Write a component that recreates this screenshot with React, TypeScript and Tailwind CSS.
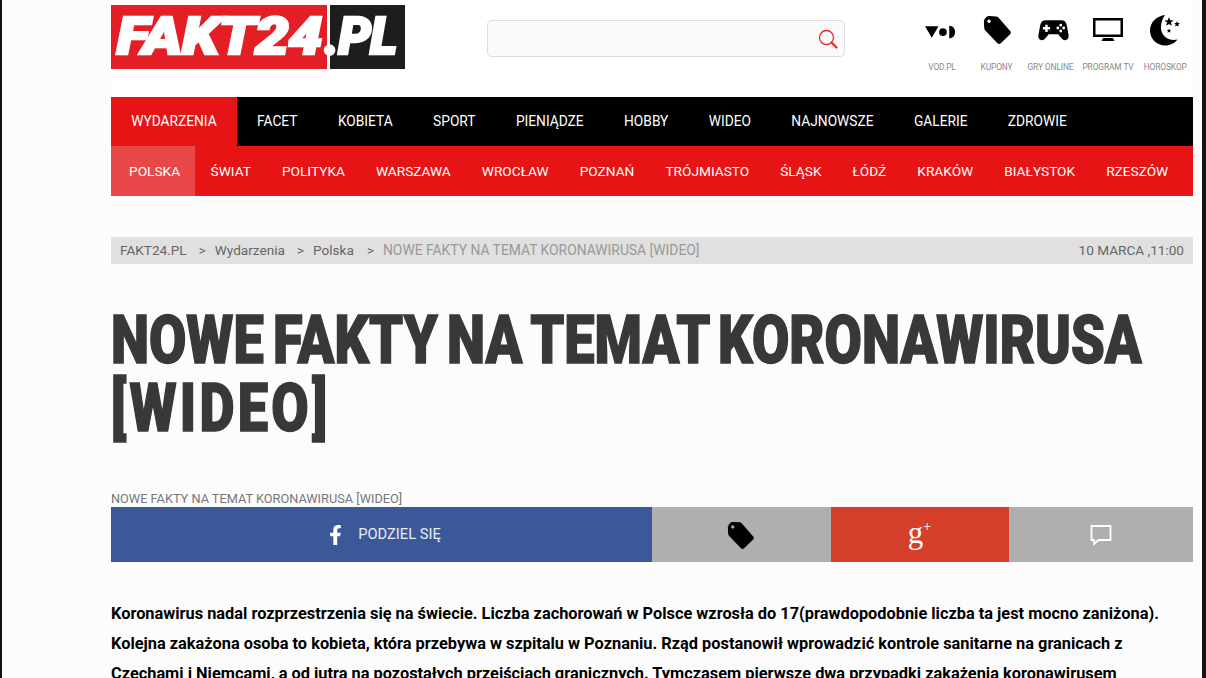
import React from "react"
import { FaFacebookF } from "react-icons/fa"

const roboto = "font-['Roboto',sans-serif]"

const topItems = ["WYDARZENIA", "FACET", "KOBIETA", "SPORT", "PIENIĄDZE", "HOBBY", "WIDEO", "NAJNOWSZE", "GALERIE", "ZDROWIE"]
const subItems = ["POLSKA", "ŚWIAT", "POLITYKA", "WARSZAWA", "WROCŁAW", "POZNAŃ", "TRÓJMIASTO", "ŚLĄSK", "ŁÓDŹ", "KRAKÓW", "BIAŁYSTOK", "RZESZÓW"]

const TagIcon = ({ className }: { className?: string }) => (
  <svg viewBox="0 0 32 32" className={className}>
    <path
      fillRule="evenodd"
      d="M3.5 3.5 C4.5 1.5 6 1 8 1 L15 1.5 C16 1.6 16.800 2 17.500 2.700 L30 17 C31 18.200 31 19.500 30 20.500 L20 30.200 C19 31.200 17.500 31.200 16.500 30.200 L3.500 16.500 C2.800 15.800 2.500 15 2.400 14 L2 7 C2 5.500 2.800 4.500 3.500 3.500 Z M7.500 4.800 A1.800 1.800 0 1 0 7.501 8.400 A1.800 1.800 0 1 0 7.500 4.800 Z"
    />
  </svg>
)

const VodIcon = () => (
  <svg viewBox="0 0 32 14" className="w-[31px] h-[14px] mt-[3px] mr-[3px]">
    <path d="M0 1 H14 L7 13 Z" />
    <circle cx="18.500" cy="7" r="4" />
    <path d="M25 0.500 C29 0.500 31 3.500 31 7 C31 10.500 29 13.500 25 13.500 Z" />
  </svg>
)

const PadIcon = () => (
  <svg viewBox="0 0 32 22" className="w-[31px] h-[22px] ml-[6px]">
    <path
      fillRule="evenodd"
      d="M8 1 H24 C27 1 28.800 2.500 29.600 5.500 L31.500 16 C32 19.500 30.500 21.500 28 21.500 C26 21.500 24.500 20 23 18 L21 15.500 H11 L9 18 C7.500 20 6 21.500 4 21.500 C1.500 21.500 0 19.500 0.500 16 L2.400 5.500 C3.200 2.500 5 1 8 1 Z M7.500 5.500 V8 H5 V10.500 H7.500 V13 H10 V10.500 H12.500 V8 H10 V5.500 Z M23.500 4.500 A1.500 1.500 0 1 0 23.501 7.500 A1.500 1.500 0 1 0 23.500 4.500 Z M20.500 7.500 A1.500 1.500 0 1 0 20.501 10.500 A1.500 1.500 0 1 0 20.500 7.500 Z M26.500 7.500 A1.500 1.500 0 1 0 26.501 10.500 A1.500 1.500 0 1 0 26.500 7.500 Z M23.500 10.500 A1.500 1.500 0 1 0 23.501 13.500 A1.500 1.500 0 1 0 23.500 10.500 Z"
    />
  </svg>
)

const TvIcon = () => (
  <svg viewBox="0 0 30 24" className="w-[30px] h-[24px]">
    <path fillRule="evenodd" d="M0 0 H30 V19 H0 Z M2.500 2.500 V16.500 H27.500 V2.500 Z" />
    <path d="M10 20 H20 L21.500 23 H8.500 Z" />
  </svg>
)

const MoonIcon = () => (
  <svg viewBox="0 0 32 32" className="w-[32px] h-[32px]">
    <path d="M16 1 C8 2 1 8 1 16.500 C1 25 8 31.500 16 31.500 C21.500 31.500 25.800 29 28.500 25.500 C21 27.500 12.500 23 12 14.500 C11.800 9 13.500 4.500 16 1 Z" />
    <path d="M20 3 L21.200 6.200 L24.500 6.400 L22 8.500 L22.800 11.800 L20 10 L17.200 11.800 L18 8.500 L15.500 6.400 L18.800 6.200 Z" />
    <path d="M28 7 L28.800 9 L31 9.200 L29.300 10.600 L29.800 12.800 L28 11.600 L26.200 12.800 L26.700 10.600 L25 9.200 L27.200 9 Z" />
    <path d="M20 14.500 L20.600 16 L22.200 16.100 L21 17.100 L21.400 18.700 L20 17.800 L18.600 18.700 L19 17.100 L17.800 16.100 L19.400 16 Z" />
  </svg>
)

const SearchIcon = () => (
  <svg viewBox="0 0 20 20" fill="none" className="w-[20px] h-[20px]">
    <circle cx="8.500" cy="8.500" r="7" stroke="#e8262a" strokeWidth="1.300" />
    <path d="M13.500 13.500 L18.500 18.500" stroke="#e8262a" strokeWidth="2.200" strokeLinecap="round" />
  </svg>
)

const services = [
  { label: "VOD.PL", icon: <VodIcon />, w: "w-[57px]" },
  { label: "KUPONY", icon: <TagIcon className="w-[30px] h-[30px]" />, w: "w-[52px]" },
  { label: "GRY ONLINE", icon: <PadIcon />, w: "w-[56px]" },
  { label: "PROGRAM TV", icon: <TvIcon />, w: "w-[59px]" },
  { label: "HOROSKOP", icon: <MoonIcon />, w: "w-[55.500px]" },
]

const App: React.FC = () => {
  return (
    <div className={`h-[678px] overflow-hidden bg-[#fcfcfc] border-l-2 border-r-4 border-[#141414] pl-[109px] pr-[9px] ${roboto}`}>
      <div className="bg-white h-[97px] flex">
        <div className="flex pt-[5px] h-[69px] font-black italic text-white leading-none">
          <div className="w-[216px] h-[64px] bg-[#e31e24] flex items-center justify-center text-[52px] tracking-[-0.5px] [-webkit-text-stroke:2.500px_white]">
            <span className="inline-block scale-x-[1.16]">FAKT24</span>
          </div>
          <div className="relative ml-[3px] w-[75px] h-[64px] bg-[#1d1d1b] flex items-center text-[52px] tracking-[-1px] [-webkit-text-stroke:2.500px_white]">
            <span className="-ml-[6px]">.PL</span>
          </div>
        </div>
        <div className="ml-[82px] mt-[20px] w-[358px] h-[37px] bg-[#fafafa] border border-[#dddddd] rounded-[5px] flex items-center justify-end pr-[6px]">
          <SearchIcon />
        </div>
        <div className="ml-[68.500px] flex">
          {services.map((s) => (
            <div key={s.label} className={`${s.w} flex flex-col items-center`}>
              <div className="h-[60px] flex items-center justify-center">{s.icon}</div>
              <div className="mt-[1px] text-[8.400px] leading-[12px] tracking-[-0.1px] text-[#8a8a8a] whitespace-nowrap">{s.label}</div>
            </div>
          ))}
        </div>
      </div>

      <nav className="bg-black h-[49px] flex text-[13.750px] text-white">
        {topItems.map((item, i) => (
          <div key={item} className={`flex items-center px-[20.200px] ${i === 0 ? "bg-[#e61414]" : ""}`}>
            {item}
          </div>
        ))}
      </nav>
      <nav className="bg-[#e61414] h-[50px] flex text-[13.700px] text-white">
        {subItems.map((item, i) => (
          <div
            key={item}
            className={`flex items-center ${i === 0 ? "bg-[#ea4848] pl-[18px] pr-[15px]" : "px-[15.500px]"}`}
          >
            {item}
          </div>
        ))}
      </nav>

      <div className="mt-[41px] h-[27px] bg-[#e0e0e0] flex items-center justify-between px-[9px] text-[13.600px] text-[#666666]">
        <div className="flex">
          <span>FAKT24.PL</span>
          <span className="ml-[12px]">&gt;</span>
          <span className="ml-[9px]">Wydarzenia</span>
          <span className="ml-[12px]">&gt;</span>
          <span className="ml-[9px]">Polska</span>
          <span className="ml-[13px]">&gt;</span>
          <span className="ml-[9px] text-[13.860px] text-[#999999]">NOWE FAKTY NA TEMAT KORONAWIRUSA [WIDEO]</span>
        </div>
        <span>10 MARCA ,11:00</span>
      </div>

      <h1 className="mt-[42.500px] w-[1400px] origin-left scale-x-[0.82] text-[66px] leading-[68.500px] font-black text-[#383838] [word-spacing:-5px] [-webkit-text-stroke:1.500px_#383838]">
        NOWE FAKTY NA TEMAT KORONAWIRUSA
        <br />
        <span className="tracking-[4px]">[WIDEO]</span>
      </h1>

      <div className="mt-[46.500px] text-[12.750px] leading-[17px] text-[#777777]">NOWE FAKTY NA TEMAT KORONAWIRUSA [WIDEO]</div>

      <div className="h-[55px] flex text-white">
        <div className="w-[541px] bg-[#3b5998] flex items-center justify-center gap-[15px] pl-[6px] text-[14.700px] text-[#e8ebf3]">
          <FaFacebookF className="w-[15px] h-[20px] text-white" />
          <span>PODZIEL SIĘ</span>
        </div>
        <div className="w-[178.500px] bg-[#afafaf] flex items-center justify-center">
          <TagIcon className="w-[29px] h-[29px] mt-[2px] mr-[2px] text-black" />
        </div>
        <div className="w-[178px] bg-[#d53e2a] flex items-start justify-center font-['Liberation_Serif',serif] pt-[11px]">
          <span className="text-[31px] leading-[30px]">g</span>
          <span className="text-[14px] leading-[18px]">+</span>
        </div>
        <div className="flex-1 bg-[#afafaf] flex items-center justify-center">
          <svg viewBox="0 0 22 22" fill="none" stroke="white" strokeWidth="1.800" className="w-[22px] h-[22px]">
            <path d="M1.500 2 H20.500 V16 H8.500 L4 20 V16 H1.500 Z" />
          </svg>
        </div>
      </div>

      <p className="mt-[37px] text-[16.350px] leading-[30px] font-bold text-black">
        Koronawirus nadal rozprzestrzenia się na świecie. Liczba zachorowań w Polsce wzrosła do 17(prawdopodobnie liczba ta jest mocno zaniżona). Kolejna zakażona osoba to kobieta, która przebywa w szpitalu w Poznaniu. Rząd postanowił wprowadzić kontrole sanitarne na granicach z Czechami i Niemcami, a od jutra na pozostałych przejściach granicznych. Tymczasem pierwsze dwa przypadki zakażenia koronawirusem
      </p>
    </div>
  )
}

export default App
